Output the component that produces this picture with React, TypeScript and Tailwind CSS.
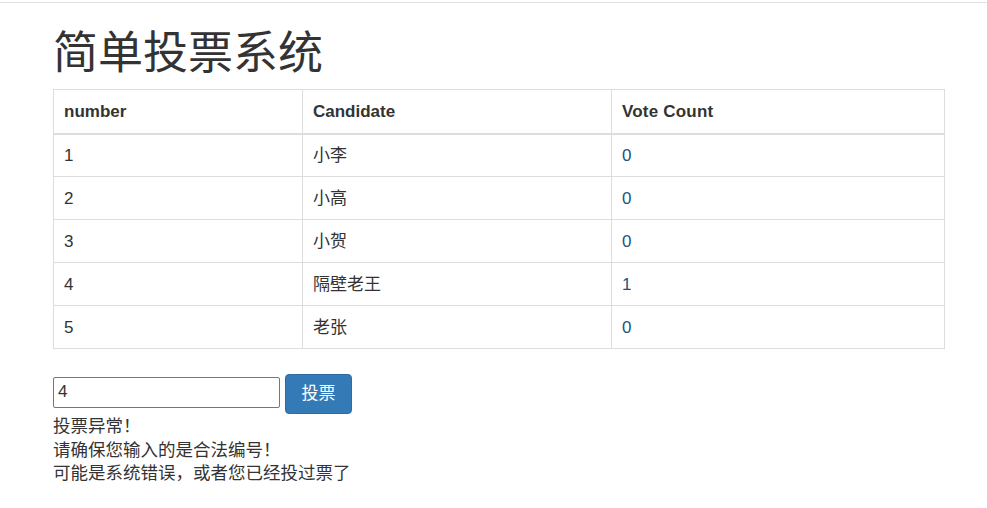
import React, { useState } from "react";

const rows = [
  { id: 1, name: "小李", votes: 0 },
  { id: 2, name: "小高", votes: 0 },
  { id: 3, name: "小贺", votes: 0 },
  { id: 4, name: "隔壁老王", votes: 1 },
  { id: 5, name: "老张", votes: 0 },
];

const font = { fontFamily: '"Liberation Sans", "Noto Sans CJK SC", sans-serif' };

const App = () => {
  const [value, setValue] = useState("4");
  return (
    <div className="min-h-[508px] bg-white text-[#333]" style={font}>
      <div className="h-[2px]" />
      <div className="h-[1px] bg-[#e0e0e0]" />
      <div className="ml-[53px] w-[892px]">
        <h1 className="pt-[21px] h-[86px] text-[45px] leading-[60px] font-normal text-[#333]">简单投票系统</h1>

        <table className="w-full border-collapse text-[17px]">
          <thead>
            <tr className="h-[44px]">
              <th className="w-[249px] border border-[#ddd] border-b-2 px-[10px] pt-[1px] text-left font-bold">number</th>
              <th className="w-[309px] border border-[#ddd] border-b-2 px-[10px] pt-[1px] text-left font-bold">Candidate</th>
              <th className="border border-[#ddd] border-b-2 px-[10px] pt-[1px] text-left font-bold tracking-[0.2px]">Vote Count</th>
            </tr>
          </thead>
          <tbody>
            {rows.map((r) => (
              <tr key={r.id} className="h-[43px]">
                <td className="border border-[#ddd] px-[10px] pt-[1px]">{r.id}</td>
                <td className="border border-[#ddd] px-[10px] pt-[1px]">{r.name}</td>
                <td className="border border-[#ddd] px-[10px] pt-[1px] text-[#23527c]">{r.votes}</td>
              </tr>
            ))}
          </tbody>
        </table>

        <div className="mt-[25px] flex items-center gap-[5px]">
          <input
            value={value}
            onChange={(e) => setValue(e.target.value)}
            className="w-[227px] h-[31px] mb-[4px] border border-[#767676] rounded-[2px] px-[4px] text-[17px] text-[#333] outline-none"
          />
          <button className="w-[67px] h-[40px] rounded-[4px] bg-[#337ab7] border border-[#2e6da4] text-white text-[17px]">投票</button>
        </div>

        <div className="mt-[1px] text-[17.5px] leading-[23.5px]">
          <p>投票异常！</p>
          <p>请确保您输入的是合法编号！</p>
          <p>可能是系统错误，或者您已经投过票了</p>
        </div>
      </div>
    </div>
  );
};

export default App;
